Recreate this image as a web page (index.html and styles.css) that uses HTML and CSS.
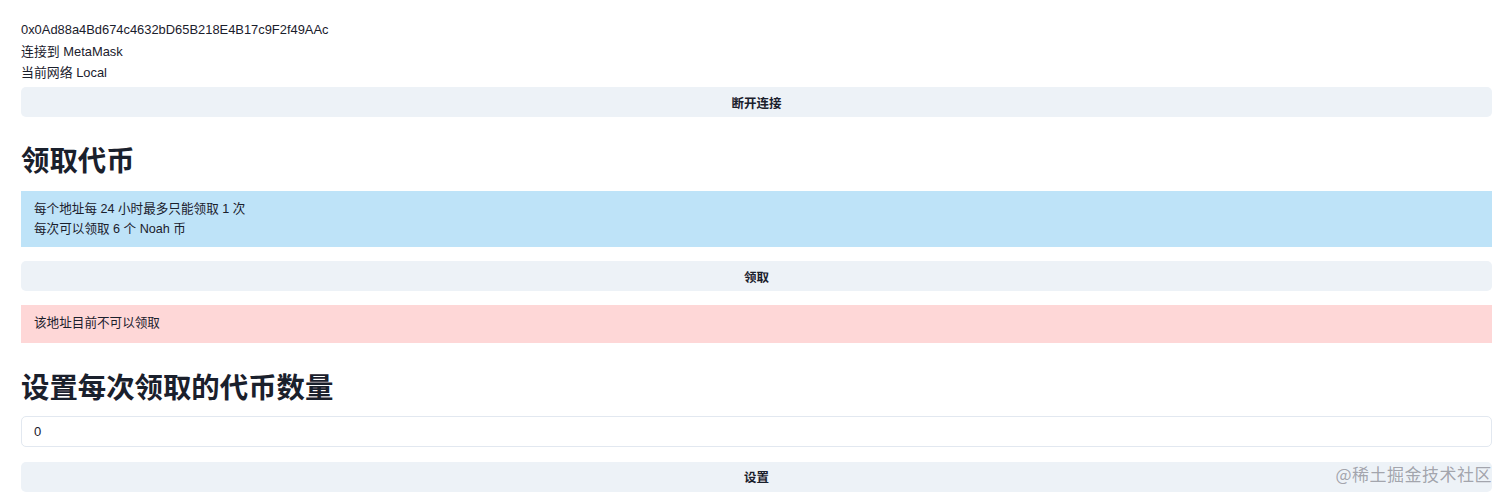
FILE: index.html
```html
<!DOCTYPE html>
<html lang="zh-CN">
<head>
<meta charset="utf-8">
<title>Faucet</title>
<link rel="stylesheet" href="styles.css">
</head>
<body>
<div class="page">
  <div class="info-lines">
    <p class="line">0x0Ad88a4Bd674c4632bD65B218E4B17c9F2f49AAc</p>
    <p class="line">连接到 MetaMask</p>
    <p class="line">当前网络 Local</p>
  </div>
  <button class="btn">断开连接</button>

  <h2 class="heading">领取代币</h2>
  <div class="alert alert-info">
    <p class="alert-line">每个地址每 24 小时最多只能领取 1 次</p>
    <p class="alert-line">每次可以领取 6 个 Noah 币</p>
  </div>
  <button class="btn btn-gap">领取</button>
  <div class="alert alert-error alert-gap">
    <p class="alert-line">该地址目前不可以领取</p>
  </div>

  <h2 class="heading heading-2">设置每次领取的代币数量</h2>
  <input class="input" type="text" value="0">
  <button class="btn btn-gap2">设置</button>
</div>
<div class="watermark">@稀土掘金技术社区</div>
</body>
</html>
```
FILE: styles.css
```css
* { box-sizing: border-box; }
html, body { margin: 0; padding: 0; background: #fff; }
body {
  font-family: "Liberation Sans", "Noto Sans CJK SC", sans-serif;
  color: #1a202c;
  font-size: 13px;
}
.page {
  padding: 19px 20px 0 21px;
  display: flex;
  flex-direction: column;
}
.info-lines { display: flex; flex-direction: column; }
.line { margin: 0; line-height: 21.7px; font-size: 12.9px; }
.btn {
  display: block;
  width: 100%;
  height: 30px;
  margin-top: 3px;
  border: none;
  border-radius: 5px;
  background: #edf2f7;
  color: #1a202c;
  font-family: "Liberation Sans", "Noto Sans CJK SC", sans-serif;
  font-size: 12.5px;
  font-weight: 700;
  padding: 0;
}
.btn-gap { margin-top: 14px; }
.btn-gap2 { margin-top: 15px; }
.heading {
  margin: 27px 0 13px;
  font-size: 28.4px;
  line-height: 34px;
  font-weight: 700;
  color: #1a202c;
}
.heading-2 { margin: 28px 0 11px; }
.alert {
  padding: 8px 13px;
  display: flex;
  flex-direction: column;
}
.alert-line { margin: 0; line-height: 19.5px; font-size: 12.6px; color: #1a202c; }
.alert-info { background: #bee3f8; padding: 9px 13px 8px; }
.alert-error { background: #fed7d7; padding: 9px 13px 9px; }
.alert-gap { margin-top: 14px; }
.input {
  width: 100%;
  height: 31px;
  border: 1px solid #e2e8f0;
  border-radius: 5px;
  padding: 0 12px;
  font-family: "Liberation Sans", "Noto Sans CJK SC", sans-serif;
  font-size: 13px;
  color: #1a202c;
  background: #fff;
}
.watermark {
  position: absolute;
  right: 20px;
  top: 461px;
  font-family: "Noto Sans CJK SC", sans-serif;
  font-size: 17px;
  color: rgba(120, 120, 130, 0.65);
  letter-spacing: 0.5px;
}
```
